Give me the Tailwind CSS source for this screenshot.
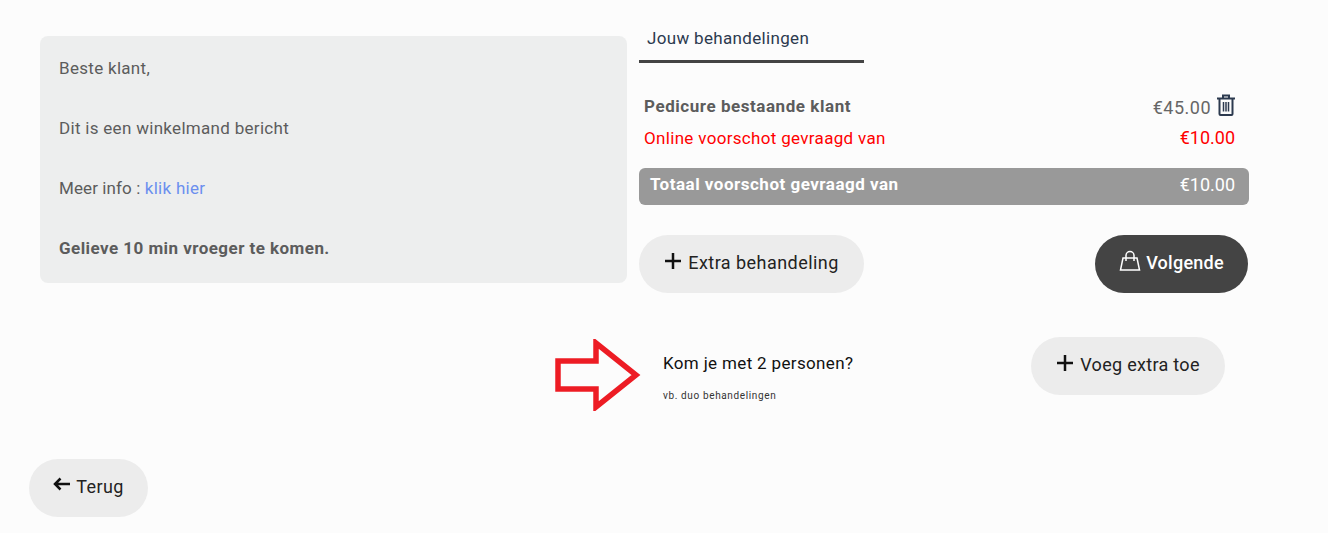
<!DOCTYPE html>
<html lang="en">
<head>
  <meta charset="UTF-8" />
  <meta name="viewport" content="width=device-width, initial-scale=1.0" />
  <script src="https://cdn.jsdelivr.net/npm/@tailwindcss/browser@4"></script>
  <title>Winkelmand</title>
</head>
<body class="bg-[#fcfcfc] h-[533px] overflow-hidden font-['Roboto',sans-serif] text-[17px] text-[#5c5c5c]">
  <div class="flex pl-[40px] gap-[12px]">
    <!-- bericht -->
    <div class="w-[587px] h-[247px] mt-[36px] bg-[#edeeee] rounded-[8px] pl-[19px] pt-[17px] leading-[30px] tracking-[0.3px]">
      <p class="h-[60px]">Beste klant,</p>
      <p class="h-[60px]">Dit is een winkelmand bericht</p>
      <p class="h-[60px]"><span class="tracking-[0.1px]">Meer info : </span><a class="text-[#6b8fee]">klik hier</a></p>
      <p class="font-bold tracking-[0.45px]">Gelieve 10 min vroeger te komen.</p>
    </div>
    <!-- behandelingen -->
    <div class="w-[610px]">
      <div class="w-[225px] h-[63px] border-b-[3px] border-[#444] pl-[8px] pt-[26px] leading-[24px] text-[#2c3a4f] tracking-[0.33px]">Jouw behandelingen</div>
      <div class="flex justify-between items-center h-[28px] mt-[30px] pl-[5px] pr-[13px]">
        <span class="font-bold tracking-[0.55px]">Pedicure bestaande klant</span>
        <span class="flex items-center gap-[5px] text-[18px] text-[#666] tracking-[0.5px]">
          <span>€45.00</span>
          <svg class="w-[20px] h-[22px] mb-[4px]" viewBox="0 0 20 22" fill="none" stroke="#2c3a4f" stroke-width="2">
            <path d="M1 4.500h18M7 4V1.500h6V4M3.500 5v15a1 1 0 0 0 1 1h11a1 1 0 0 0 1-1V5" />
            <path d="M7.500 8v9.500M10 8v9.500M12.500 8v9.500" stroke-width="1.500" />
          </svg>
        </span>
      </div>
      <div class="flex justify-between items-center h-[28px] mt-[4px] pl-[5px] pr-[14px] text-[#ff0000]">
        <span class="tracking-[0.32px]">Online voorschot gevraagd van</span>
        <span class="text-[18px] pb-[4px]">€10.00</span>
      </div>
      <div class="flex justify-between items-center h-[37px] mt-[15px] pl-[11px] pr-[14px] pb-[4px] bg-[#999] rounded-[6px] text-white font-bold">
        <span class="tracking-[0.5px]">Totaal voorschot gevraagd van</span>
        <span class="text-[18px] font-normal">€10.00</span>
      </div>
      <div class="flex justify-between mt-[30px] pr-[1px] text-[18px] tracking-[0.45px]">
        <button class="w-[225px] h-[58px] pb-[4px] rounded-[29px] bg-[#ececec] text-[#222] flex items-center justify-center gap-[6px]">
          <svg class="w-[18px] h-[18px] mb-[2px]" viewBox="0 0 18 18" fill="none" stroke="#111" stroke-width="2.500"><path d="M9 1v16M1 9h16" /></svg>
          Extra behandeling
        </button>
        <button class="w-[153px] h-[58px] pb-[4px] rounded-[29px] bg-[#444] text-white font-medium flex items-center justify-center gap-[5px] tracking-[0.25px]">
          <svg class="w-[22px] h-[22px] mb-[2px]" viewBox="0 0 22 22" fill="none" stroke="#fff" stroke-width="1.500"><path d="M4 8h14l2.500 12h-19zM7 11V5.500a4 4 0 0 1 8 0V11" /></svg>
          Volgende
        </button>
      </div>
    </div>
  </div>
  <!-- extra persoon -->
  <div class="relative h-[58px] mt-[44px] ml-[1031px] w-[194px]">
    <svg class="absolute left-[-476px] top-[2px] w-[86px] h-[72px]" viewBox="0 0 86 72" fill="none" stroke="#ed1c24" stroke-width="5.500">
      <path d="M3 22H41V4L81 36 41 68V50H3Z" />
    </svg>
    <div class="absolute left-[-368px] top-[14px] w-[300px] text-[#111]">
      <p class="leading-[24px] tracking-[0.35px]">Kom je met 2 personen?</p>
      <p class="mt-[14px] text-[10px] leading-[14px] text-[#333] tracking-[0.63px]">vb. duo behandelingen</p>
    </div>
    <button class="w-full h-full pb-[4px] rounded-[29px] bg-[#ececec] text-[#222] text-[18px] tracking-[0.3px] flex items-center justify-center gap-[6px]">
      <svg class="w-[18px] h-[18px] mb-[2px]" viewBox="0 0 18 18" fill="none" stroke="#111" stroke-width="2.500"><path d="M9 1v16M1 9h16" /></svg>
      Voeg extra toe
    </button>
  </div>
  <div class="mt-[64px] ml-[29px]">
    <button class="w-[119px] h-[58px] pb-[4px] rounded-[29px] bg-[#ececec] text-[#222] text-[18px] tracking-[0.4px] flex items-center justify-center gap-[6px]">
      <svg class="w-[17px] h-[14px] mb-[4px]" viewBox="0 0 17 14" fill="none" stroke="#111" stroke-width="2.500"><path d="M17 7H2M7.500 1.500 2 7l5.500 5.500" /></svg>
      Terug
    </button>
  </div>
</body>
</html>
